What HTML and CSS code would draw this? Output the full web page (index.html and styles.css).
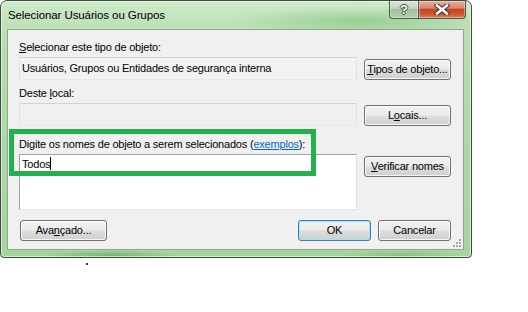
FILE: index.html
```html
<!DOCTYPE html>
<html lang="pt-BR">
  <head>
    <meta charset="UTF-8" />
    <title>Selecionar Usuários ou Grupos</title>
    <link rel="stylesheet" href="styles.css">
  </head>
  <body>
    <div class="window">
      <div class="titlebar">
        <span class="title">Selecionar Usuários ou Grupos</span>
        <div class="caption-btns">
          <div class="cap help"><span>?</span></div>
          <div class="cap close">
            <svg width="16" height="11" viewBox="0 0 16 11">
              <path d="M3 1.5 L13 9.5 M13 1.5 L3 9.5" stroke="#3b3030" stroke-width="4.6" stroke-linecap="square" fill="none"/>
              <path d="M3 1.5 L13 9.5 M13 1.5 L3 9.5" stroke="#fff" stroke-width="2.6" stroke-linecap="square" fill="none"/>
            </svg>
          </div>
        </div>
      </div>

      <div class="client">
        <label class="lbl"><u>S</u>elecionar este tipo de objeto:</label>
        <div class="row">
          <div class="field readonly">Usuários, Grupos ou Entidades de segurança interna</div>
          <button class="btn"><u>T</u>ipos de objeto...</button>
        </div>

        <label class="lbl second">Deste <u>l</u>ocal:</label>
        <div class="row">
          <div class="field readonly disabled"></div>
          <button class="btn">L<u>o</u>cais...</button>
        </div>

        <label class="lbl third">Digite os nomes de objeto a serem selecionados (<a class="link">exemplos</a>):</label>
        <div class="row">
          <div class="field names">Todos<span class="caret"></span></div>
          <button class="btn"><u>V</u>erificar nomes</button>
        </div>

        <div class="footer">
          <button class="btn advanced">Ava<u>n</u>çado...</button>
          <div class="spacer"></div>
          <button class="btn small default">OK</button>
          <button class="btn small">Cancelar</button>
        </div>

        <svg class="grip" width="9" height="9" viewBox="0 0 9 9">
          <g fill="#fff">
            <rect x="7" y="2" width="2" height="2"/><rect x="4" y="5" width="2" height="2"/><rect x="7" y="5" width="2" height="2"/>
            <rect x="1" y="8" width="2" height="1"/><rect x="4" y="8" width="2" height="1"/><rect x="7" y="8" width="2" height="1"/>
          </g>
          <g fill="#a7a7a7">
            <rect x="6" y="1" width="2" height="2"/><rect x="3" y="4" width="2" height="2"/><rect x="6" y="4" width="2" height="2"/>
            <rect x="0" y="7" width="2" height="2"/><rect x="3" y="7" width="2" height="2"/><rect x="6" y="7" width="2" height="2"/>
          </g>
        </svg>
      </div>
    </div>

    <div class="highlight"></div>
    <div class="dot"></div>
  </body>
</html>
```

FILE: styles.css
```css
* {
    box-sizing: border-box;
}

body {
    margin: 0;
    background: #fff;
    font-family: "Liberation Sans", Arial, sans-serif;
    font-size: 11px;
    letter-spacing: -0.2px;
    color: #000;
    position: relative;
    height: 312px;
}

.window {
    width: 472px;
    height: 258px;
    display: flex;
    flex-direction: column;
    border: 1px solid #3e4c3e;
    border-radius: 7px 7px 4px 4px;
    box-shadow: inset 0 0 0 1px rgba(255, 255, 255, 0.55);
    background:
        radial-gradient(ellipse 130px 14px at 360px 20px, rgba(120, 190, 114, 0.55), transparent),
        radial-gradient(ellipse 70px 5px at 110px 254px, rgba(100, 172, 96, 0.75), transparent),
        radial-gradient(ellipse 60px 5px at 400px 254px, rgba(110, 180, 104, 0.55), transparent),
        linear-gradient(#cdeac8, #b8ddb2 14%, #acd7a5 60%, #a6d49f);
}

.titlebar {
    height: 28px;
    display: flex;
    align-items: flex-start;
}

.title {
    padding: 7px 0 0 7px;
    font-size: 11.5px;
    line-height: 15px;
    letter-spacing: -0.1px;
}

.caption-btns {
    margin-left: auto;
    margin-right: 5px;
    display: flex;
}

.cap {
    height: 18px;
    border: 1px solid #4b5a4c;
    border-top: none;
    display: flex;
    align-items: center;
    justify-content: center;
    box-shadow: inset 0 0 0 1px rgba(255, 255, 255, 0.35);
}

.help {
    width: 29px;
    border-right: none;
    border-radius: 0 0 0 4px;
    background: linear-gradient(#dbe9d8, #bed4bb 45%, #a3bfa0 50%, #b4cfb0);
}

.help span {
    color: #fff;
    font-weight: bold;
    font-size: 13px;
    letter-spacing: 0;
    line-height: 13px;
    text-shadow: 1px 0 0 #3c4a3c, -1px 0 0 #3c4a3c, 0 1px 0 #3c4a3c, 0 -1px 0 #3c4a3c;
}

.close {
    width: 48px;
    border-radius: 0 0 4px 0;
    background: linear-gradient(#eab0a2, #d9846d 42%, #c4451f 50%, #cf5a35 80%, #dc8264);
}

.close svg {
    display: block;
}

.client {
    margin: 0 7px 0 6px;
    height: 221px;
    background: #f0f0f0;
    border: 1px solid #93a590;
    padding: 10px 12px 0 11px;
    position: relative;
}

.lbl {
    display: block;
    line-height: 15px;
    margin-bottom: 2px;
}

.lbl.second {
    margin-top: 6px;
}

.lbl.third {
    margin-top: 11px;
}

.link {
    color: #0066cc;
    text-decoration: underline;
}

.row {
    display: flex;
    align-items: flex-start;
    gap: 7px;
}

.field {
    width: 338px;
    height: 23px;
    border: 1px solid;
    padding: 0 2px;
    line-height: 21px;
    white-space: nowrap;
}

.field.readonly {
    background: #f2f2f2;
    border-color: #cfd2d6 #e0e2e5 #e6e8eb #e0e2e5;
}

.field.disabled {
    background: #f0f0f0;
}

.field.names {
    height: 56px;
    background: #fff;
    border-color: #9da1a8 #dfe3e8 #e3e7ec #9da1a8;
    padding: 2px 2px;
    line-height: 15px;
}

.caret {
    display: inline-block;
    width: 1px;
    height: 13px;
    background: #000;
    vertical-align: -2px;
}

.btn {
    width: 87px;
    height: 21px;
    margin-top: 2px;
    padding: 0;
    border: 1px solid #707070;
    border-radius: 3px;
    background: linear-gradient(#f2f2f2, #ebebeb 48%, #dddddd 52%, #cfcfcf);
    box-shadow: inset 0 0 0 1px rgba(255, 255, 255, 0.8);
    font-family: inherit;
    font-size: 11px;
    letter-spacing: -0.2px;
    color: #000;
    line-height: 19px;
}

.footer {
    margin-top: 10px;
    display: flex;
}

.footer .btn {
    margin-top: 0;
}

.advanced {
    margin-left: 1px;
}

.spacer {
    flex: 1;
}

.btn.small {
    width: 73px;
}

.btn.default {
    margin-right: 7px;
    border-color: #3c7fb1;
    box-shadow: inset 0 0 0 1px #a6e1f7;
}

.grip {
    position: absolute;
    right: 1px;
    bottom: 2px;
}

.highlight {
    position: absolute;
    left: 9px;
    top: 129px;
    width: 307px;
    height: 47px;
    border: 5px solid #22b14c;
}

.dot {
    position: absolute;
    left: 86px;
    top: 263px;
    width: 2px;
    height: 2px;
    background: #333;
}
```
